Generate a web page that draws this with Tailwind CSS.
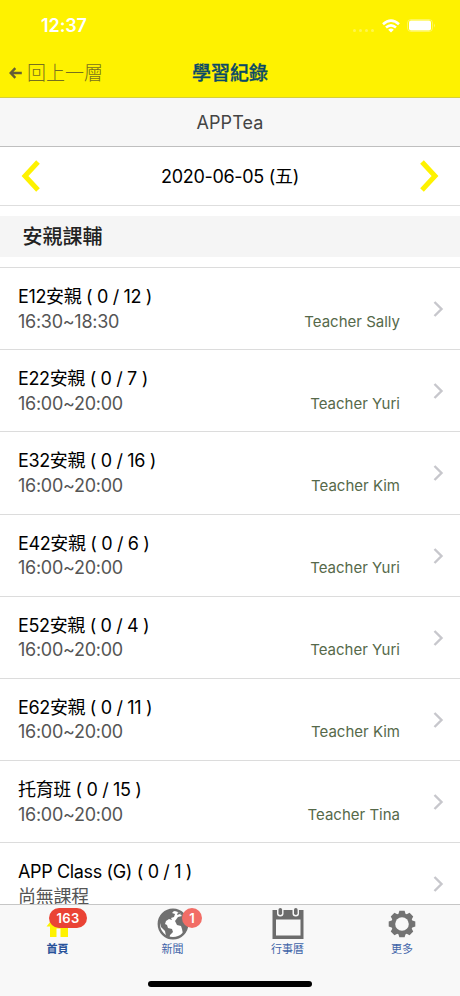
<!DOCTYPE html>
<html lang="zh-Hant">
<head>
<meta charset="utf-8">
<title>學習紀錄</title>
<script src="https://cdn.jsdelivr.net/npm/@tailwindcss/browser@4"></script>
</head>
<body class="bg-white">
<div class="relative flex h-[996px] w-[460px] flex-col overflow-hidden bg-white font-['Inter','Noto_Sans_CJK_TC',sans-serif] text-[18px] text-black">
  <header class="h-[98px] shrink-0 border-b border-[#d5cf3c] bg-[#fef200]">
    <div class="flex h-[50px] items-center pl-[41px] pr-[25px] pt-px">
      <span class="text-[18px] font-semibold leading-[20px] tracking-[-0.1px] text-white">12:37</span>
      <div class="ml-auto flex items-center">
        <div class="mr-[8px] mt-[9px] flex gap-[3px]">
          <i class="size-[3px] rounded-full bg-white/30"></i><i class="size-[3px] rounded-full bg-white/30"></i><i class="size-[3px] rounded-full bg-white/30"></i><i class="size-[3px] rounded-full bg-white/30"></i>
        </div>
        <svg class="mr-[7px] h-[14px] w-[18px]" viewBox="0 0 18 14" fill="none" stroke="#fff" stroke-width="2.6"><path d="M1 5.2Q9-2 17 5.2M4 8.600Q9 4.200 14 8.600"/><path d="M6.2 10.700Q9 8.300 11.800 10.700L9 13.500Z" fill="#fff" stroke="none"/></svg>
        <svg class="h-[13px] w-[28px]" viewBox="0 0 28 13"><rect x=".5" y=".5" width="25" height="12" rx="3.5" fill="none" stroke="#fff" stroke-opacity=".35"/><rect x="2" y="1.500" width="22" height="10" rx="2" fill="#fff"/><path d="M27 4.500q1.400 2 0 4z" fill="#fff" fill-opacity=".5"/></svg>
      </div>
    </div>
    <div class="grid h-[47px] grid-cols-[1fr_auto_1fr] items-center pt-px">
      <div class="flex items-center pl-[9px] text-[#77701e]">
        <svg class="mr-[5px] h-[12px] w-[13px] -translate-y-px" viewBox="0 0 13 12" fill="none" stroke="#655f35" stroke-width="2.4"><path d="M12.800 6H2M6.300 1.200L1.700 6l4.600 4.800"/></svg>
        <span class="text-[19px] font-light leading-[26px]">回上一層</span>
      </div>
      <h1 class="text-[19px] font-medium leading-[26px] text-[#0b4a66] [-webkit-text-stroke:0.3px_#0b4a66]">學習紀錄</h1>
    </div>
  </header>
  <div class="flex h-[49px] shrink-0 items-center justify-center border-b border-[#bfbfbf] bg-[#f7f7f7] pt-px text-[18px] tracking-[0.1px] text-[#444]">APPTea</div>
  <div class="flex h-[59px] shrink-0 items-center justify-between border-b border-[#dedede] px-[21px]">
    <svg class="h-[32px] w-[19px]" viewBox="0 0 19 32" fill="none" stroke="#fef200" stroke-width="5"><path d="M17 2L4 16l13 14"/></svg>
    <span class="text-[18px] tracking-[-0.3px]">2020-06-05 (五)</span>
    <svg class="h-[32px] w-[19px]" viewBox="0 0 19 32" fill="none" stroke="#fef200" stroke-width="5"><path d="M2 2l13 14L2 30"/></svg>
  </div>
  <h2 class="mt-[10px] flex h-[41px] shrink-0 items-center bg-[#f5f5f5] pl-[22.5px] pt-px text-[20px] font-medium text-[#222]">安親課輔</h2>
  <ul id="list" class="mt-[10px] min-h-0 flex-1 overflow-hidden"></ul>
  <nav class="h-[92px] shrink-0 border-t border-[#c6c6c6] bg-[#f8f8f8]">
    <div class="grid grid-cols-4 text-center text-[11px] leading-[16px] text-[#3f64a8]">
      <div class="relative flex flex-col items-center pt-[3px]">
        <svg class="h-[33px] w-[32px]" viewBox="0 0 32 33" fill="#fef200"><path d="M16 4L4.500 18.500H8V29h6.500V20.500h4V29H26V18.500h2z"/></svg>
        <span class="font-bold text-[#28529a]">首頁</span>
        <b class="absolute left-[49px] top-[3px] h-[20px] w-[38px] rounded-full bg-[#ea4335] text-[13px] font-semibold leading-[20px] tracking-[0.3px] text-white">163</b>
      </div>
      <div class="relative flex flex-col items-center pt-[3px]">
        <svg class="h-[33px] w-[32px]" viewBox="0 0 32 33"><circle cx="16" cy="16" r="14.200" fill="#fff" stroke="#707070" stroke-width="2.400"/><path fill="#707070" d="M3 9Q7 3 14 2l3 1-2 2 3 1-1 3-3 1 1 2-3-1-3 2-1 3 2 1 1 3 4 1 1 3-3 3-1 4-3-3-1-5-4-4-1-4zM21 4l5 3 3 5v11l-3 3-1-5-1-3-4-1-2-4 3-4 4-1-2-2-3 1z"/></svg>
        <span>新聞</span>
        <b class="absolute left-[67px] top-[3px] size-[20px] rounded-full bg-[#f26d66] text-[13px] font-semibold leading-[20px] text-white">1</b>
      </div>
      <div class="flex flex-col items-center pt-[3px]">
        <svg class="h-[33px] w-[32px]" viewBox="0 0 32 33"><path fill="#6c6c6c" fill-rule="evenodd" d="M.5 2h31v29H.5zM4 11.500V27.500h24.500V11.500z"/><rect x="5" y="-1" width="6.500" height="9.500" rx="3" fill="#f8f8f8"/><rect x="20.500" y="-1" width="6.500" height="9.500" rx="3" fill="#f8f8f8"/><rect x="6.500" y="0" width="3.600" height="7" rx="1.800" fill="#6c6c6c"/><rect x="22" y="0" width="3.600" height="7" rx="1.800" fill="#6c6c6c"/></svg>
        <span>行事曆</span>
      </div>
      <div class="flex flex-col items-center pt-[3px] pr-px">
        <svg class="h-[33px] w-[32px]" viewBox="-16 -16 32 33"><g fill="#737373"><circle r="10"/><path id="tooth" d="M-5-8.500Q-3.200-10-2.600-13.300H2.600Q3.200-10 5-8.500V8.500Q3.200 10 2.600 13.300H-2.600Q-3.200 10-5 8.500z"/><use href="#tooth" transform="rotate(45)"/><use href="#tooth" transform="rotate(90)"/><use href="#tooth" transform="rotate(135)"/></g><circle r="6.800" fill="#f8f8f8"/></svg>
        <span>更多</span>
      </div>
    </div>
  </nav>
  <div class="absolute bottom-[9px] left-[148px] h-[6px] w-[164px] rounded-full bg-black"></div>
</div>
<script>
const rows = [
  ['E12安親 ( 0 / 12 )', '16:30~18:30', 'Teacher Sally'],
  ['E22安親 ( 0 / 7 )', '16:00~20:00', 'Teacher Yuri'],
  ['E32安親 ( 0 / 16 )', '16:00~20:00', 'Teacher Kim'],
  ['E42安親 ( 0 / 6 )', '16:00~20:00', 'Teacher Yuri'],
  ['E52安親 ( 0 / 4 )', '16:00~20:00', 'Teacher Yuri'],
  ['E62安親 ( 0 / 11 )', '16:00~20:00', 'Teacher Kim'],
  ['托育班 ( 0 / 15 )', '16:00~20:00', 'Teacher Tina'],
  ['APP Class (G) ( 0 / 1 )', '尚無課程', '']
];
document.getElementById('list').innerHTML = rows.map(([title, time, teacher]) => `
  <li class="flex h-[82.2px] border-t border-[#dcdcdc] pl-[18px] pr-[16px] pt-[17px]">
    <div class="flex-1 leading-[24px]">
      <div class="text-[18px] tracking-[-0.36px]">${title}</div>
      <div class="flex items-center justify-between pt-[0.5px] text-[#555]"><span class="text-[18px] tracking-[-0.28px]">${time}</span><span class="text-[15px] text-[#56694a]">${teacher}</span></div>
    </div>
    <svg class="ml-[33px] mt-[16px] h-[16px] w-[11px]" viewBox="0 0 11 16" fill="none" stroke="#c7c7cc" stroke-width="2.4"><path d="M1.500 1l7 7-7 7"/></svg>
  </li>`).join('');
</script>
</body>
</html></script>
